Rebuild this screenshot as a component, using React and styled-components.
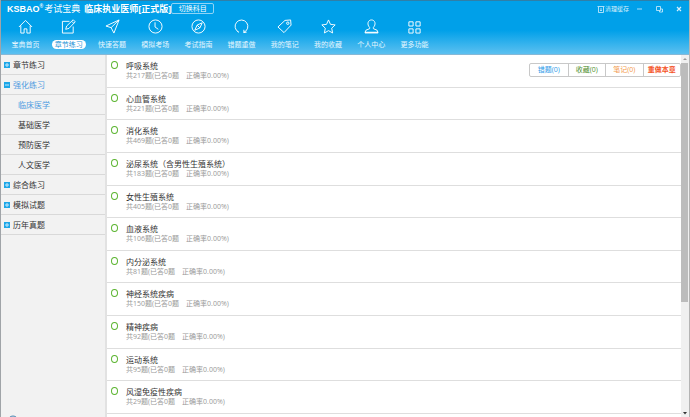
import React, { useState } from 'react'
import styled, { createGlobalStyle } from 'styled-components'

const menu = [
    { label: '章节练习' },
    { label: '强化练习', open: true, children: ['临床医学', '基础医学', '预防医学', '人文医学'] },
    { label: '综合练习' },
    { label: '模拟试题' },
    { label: '历年真题' },
]

const chapters = [
    { name: '呼吸系统', total: 217 },
    { name: '心血管系统', total: 221 },
    { name: '消化系统', total: 469 },
    { name: '泌尿系统（含男性生殖系统）', total: 183 },
    { name: '女性生殖系统', total: 405 },
    { name: '血液系统', total: 106 },
    { name: '内分泌系统', total: 81 },
    { name: '神经系统疾病', total: 150 },
    { name: '精神疾病', total: 92 },
    { name: '运动系统', total: 95 },
    { name: '风湿免疫性疾病', total: 29 },
]

const actions = [
    { label: '错题(0)', color: '#2f9be8' },
    { label: '收藏(0)', color: '#4f8f2c' },
    { label: '笔记(0)', color: '#f39a4a' },
    { label: '重做本章', color: '#f4511e', bold: true },
]

const nav = [
    { label: '宝典首页', icon: <path d="M1 8.5 8 1.5l7 7M3 7v8h3.500v-4.500h3V15H13V7" /> },
    { label: '章节练习', icon: <path d="M9 2.500H1.500v12.500H13V8M5 11l1-3.500L13 .8 15.200 3 8.500 10zM11.500 2.500l2 2" /> },
    { label: '快速答题', icon: <path d="M15 1 1 7.500l5.500 1.700L9.500 15zM15 1 6.500 9.200" /> },
    { label: '模拟考场', icon: <><circle cx="8" cy="8" r="7" /><path d="M7.500 3.500V8.500L11 11" /></> },
    { label: '考试指南', icon: <><circle cx="8" cy="8" r="7" /><path d="M12 4 9.500 9.500 4 12 6.500 6.500zM6.500 6.500l3 3" /></> },
    { label: '错题重做', icon: <path d="M5 14A6.800 6.800 0 1 1 10.500 14.200M10.500 14.800v-3.300M10.500 14.500l3-.5M5 14l-1.500-1" /> },
    { label: '我的笔记', icon: <><path d="M1 8.500 8.500 1.500 14.500 1 15 6.500 7.500 14.500z" /><circle cx="11.500" cy="4.500" r="1.300" /></> },
    { label: '我的收藏', icon: <path d="M8 1l2.100 4.700 5 .6-3.700 3.500 1 5.100L8 12.400l-4.400 2.500 1-5.100L.9 6.300l5-.6z" /> },
    { label: '个人中心', icon: <><path d="M6 9C4.500 7.500 4 5.500 4.300 4 4.800 2 6.200 1 8 1s3.200 1 3.700 3c.3 1.500-.2 3.500-1.700 5v1.300l4 1.700 1 2.500H1L2 12l4-1.700z" /><path d="M1 14.500h14" strokeWidth="2" opacity=".7" /></> },
    { label: '更多功能', icon: <path d="M2 3h4.500v4.500H2zM9.500 3H14v4.500H9.500zM2 10.500h4.500V15H2zM9.500 10.500H14V15H9.500z" /> },
]

const App = () => {
    const [active, setActive] = useState('章节练习')

    return (
        <Window>
            <GlobalStyle />
            <Header>
                <TitleBar>
                    <Logo>KSBAO<Mark>®</Mark></Logo>
                    <Brand>考试宝典</Brand>
                    <Title>临床执业医师[正式版]</Title>
                    <SwitchButton>切换科目</SwitchButton>
                    <CacheButton>
                        <Glyph viewBox="0 0 8 8"><path d="M1.500 2v5.500h5V2M0.500 1.500h7M3 4h2M3 5.500h2" /></Glyph>
                        清理缓存
                    </CacheButton>
                    <ToolButton aria-label="最小化">
                        <Glyph viewBox="0 0 8 8"><path d="M2 4h5" /></Glyph>
                    </ToolButton>
                    <ToolButton aria-label="还原">
                        <Glyph viewBox="0 0 8 8"><path d="M1.500 1.500h4v4h-4zM5.500 4h2v3h-3V5.500" /></Glyph>
                    </ToolButton>
                    <ToolButton aria-label="关闭">
                        <Glyph viewBox="0 0 8 8" $heavy><path d="M2 2l4 4M6 2 2 6" /></Glyph>
                    </ToolButton>
                </TitleBar>
                <Nav>
                    {nav.map(({ label, icon }) => (
                        <NavButton key={label} onClick={() => setActive(label)}>
                            <NavIcon viewBox="0 0 16 16">{icon}</NavIcon>
                            <NavLabel $active={label === active}>{label}</NavLabel>
                        </NavButton>
                    ))}
                </Nav>
            </Header>

            <Body>
                <Sidebar>
                    {menu.map(({ label, open, children }) => (
                        <React.Fragment key={label}>
                            <MenuButton $active={open}>
                                <Toggle viewBox="0 0 6 6">
                                    <path d={open ? 'M1 3h4' : 'M1 3h4M3 1v4'} />
                                </Toggle>
                                {label}
                            </MenuButton>
                            {children && children.map((child, i) => (
                                <SubMenuButton key={child} $active={i === 0}>{child}</SubMenuButton>
                            ))}
                        </React.Fragment>
                    ))}
                    <Helper viewBox="0 0 12 12">
                        <circle cx="6" cy="6" r="5" />
                    </Helper>
                </Sidebar>

                <ChapterList>
                    {chapters.map(({ name, total }, i) => (
                        <Chapter key={name}>
                            <Ring />
                            <ChapterText>
                                <div>{name}</div>
                                <ChapterInfo>共{total}题(已答0题　正确率0.00%)</ChapterInfo>
                            </ChapterText>
                            {i === 0 && (
                                <Actions>
                                    {actions.map(({ label, color, bold }) => (
                                        <ActionButton key={label} $color={color} $bold={bold}>{label}</ActionButton>
                                    ))}
                                </Actions>
                            )}
                        </Chapter>
                    ))}
                </ChapterList>

                <ScrollBar>
                    <Arrow viewBox="0 0 8 8"><path d="M2 5 4 3l2 2z" /></Arrow>
                    <Track><Thumb /></Track>
                    <Arrow viewBox="0 0 8 8" $dark><path d="M2 3h4L4 5.500z" /></Arrow>
                </ScrollBar>
            </Body>
        </Window>
    )
}

export default App

const GlobalStyle = createGlobalStyle`
  * {
    box-sizing: border-box;
  }
  body {
    margin: 0;
    font-family: "Open Sans", "Noto Sans CJK SC", sans-serif;
    font-size: 8px;
    line-height: 10px;
    color: #333;
  }
  button {
    margin: 0;
    padding: 0;
    border: 0;
    background: none;
    font: inherit;
    color: inherit;
    white-space: nowrap;
    cursor: pointer;
  }
`

const Window = styled.div`
  display: flex;
  flex-direction: column;
  height: 100vh;
  overflow: hidden;
  border-left: 1px solid #a0a4a8;
  border-right: 1px solid #b4b4b4;
`

const Header = styled.header`
  flex: none;
  height: 55px;
  color: white;
  background: linear-gradient(#00a0e9 0%, #00a0e9 55%, #5cc0f0 100%);
  border-top: 1px solid #2f7fa8;
  border-bottom: 1px solid #86b8d6;
`

const TitleBar = styled.div`
  display: flex;
  align-items: center;
  height: 15px;
  padding-left: 6px;
`

const Logo = styled.span`
  font-family: "Liberation Sans", sans-serif;
  font-size: 9px;
  font-weight: bold;
`

const Mark = styled.sup`
  font-size: 5px;
  line-height: 5px;
  vertical-align: top;
`

const Brand = styled.span`
  margin-left: 1px;
  font-size: 9px;
`

const Title = styled.h1`
  margin: 0 0 0 4px;
  font-size: 9px;
  font-weight: bold;
  white-space: nowrap;
`

const SwitchButton = styled.button`
  width: 43px;
  height: 11px;
  border: 1px solid #8fd4f6;
  border-radius: 2px;
  font-size: 7px;
  line-height: 9px;
`

const ToolButton = styled.button`
  display: flex;
  align-items: center;
  justify-content: center;
  width: 20px;
  color: #d4effc;
`

const CacheButton = styled(ToolButton)`
  width: auto;
  margin-left: auto;
  font-size: 6px;
`

const Glyph = styled.svg`
  width: 8px;
  height: 8px;
  fill: none;
  stroke: currentColor;
  stroke-width: ${({ $heavy }) => ($heavy ? 1.2 : 0.8)};
`

const Nav = styled.nav`
  display: flex;
  width: 432px;
  margin-left: 3px;
  padding-top: 3px;
`

const NavButton = styled.button`
  display: flex;
  flex: 1;
  flex-direction: column;
  align-items: center;
  gap: 6px;
`

const NavIcon = styled.svg`
  width: 15px;
  height: 15px;
  fill: none;
  stroke: white;
  stroke-width: 1;
  stroke-linejoin: round;
`

const NavLabel = styled.span`
  padding: 0 3px;
  border-radius: 5px;
  font-size: 7px;
  line-height: 9px;
  color: ${({ $active }) => ($active ? '#1d93d6' : '#e6f6fe')};
  background: ${({ $active }) => ($active ? 'white' : 'transparent')};
`

const Body = styled.div`
  display: flex;
  flex: 1;
  min-height: 0;
`

const Sidebar = styled.aside`
  display: flex;
  flex: none;
  flex-direction: column;
  width: 106px;
  background: #f2f2f2;
  border-right: 2px solid #e2e2e2;
  overflow: hidden;
`

const MenuButton = styled.button`
  display: flex;
  flex: none;
  align-items: center;
  gap: 3px;
  height: 20px;
  padding-left: 3px;
  border-bottom: 1px solid #d9d9d9;
  color: ${({ $active }) => ($active ? '#4f9be0' : '#333')};
`

const SubMenuButton = styled(MenuButton)`
  padding-left: 17px;
`

const Toggle = styled.svg`
  width: 6px;
  height: 6px;
  background: #1da7e8;
  stroke: #c4e8fa;
  stroke-width: 1;
`

const Helper = styled.svg`
  flex: none;
  width: 12px;
  height: 12px;
  margin: auto 0 -10px 6px;
  fill: #cfe2ef;
  stroke: #4f86b0;
`

const ChapterList = styled.ul`
  display: grid;
  flex: 1;
  grid-auto-rows: minmax(32px, 1fr);
  margin: 0;
  padding: 0 0 3px;
  list-style: none;
  background: white;
  overflow: hidden;
`

const Chapter = styled.li`
  display: flex;
  align-items: flex-start;
  padding: 6px 0 0 4px;
  border-bottom: 1px solid #dedede;
`

const Ring = styled.span`
  width: 7px;
  height: 8px;
  border: 1px solid #5cb531;
  border-radius: 50%;
`

const ChapterText = styled.div`
  margin-left: 8px;
`

const ChapterInfo = styled.div`
  font-size: 7px;
  color: #999;
`

const Actions = styled.div`
  display: grid;
  grid-template-columns: repeat(4, 1fr);
  width: 152px;
  margin: 2px 0 0 auto;
  border: 1px solid #c8c8c8;
  border-radius: 2px;
`

const ActionButton = styled.button`
  height: 12px;
  font-size: 7px;
  font-weight: ${({ $bold }) => ($bold ? 'bold' : 'normal')};
  color: ${({ $color }) => $color};

  & + & {
    border-left: 1px solid #c8c8c8;
  }
`

const ScrollBar = styled.div`
  display: flex;
  flex: none;
  flex-direction: column;
  width: 8px;
  background: #f0f0f0;
`

const Arrow = styled.svg`
  width: 8px;
  height: 8px;
  fill: ${({ $dark }) => ($dark ? '#333' : '#999')};
`

const Track = styled.div`
  flex: 1;
`

const Thumb = styled.div`
  width: 7px;
  height: 69%;
  background: #bcbcbc;
`
